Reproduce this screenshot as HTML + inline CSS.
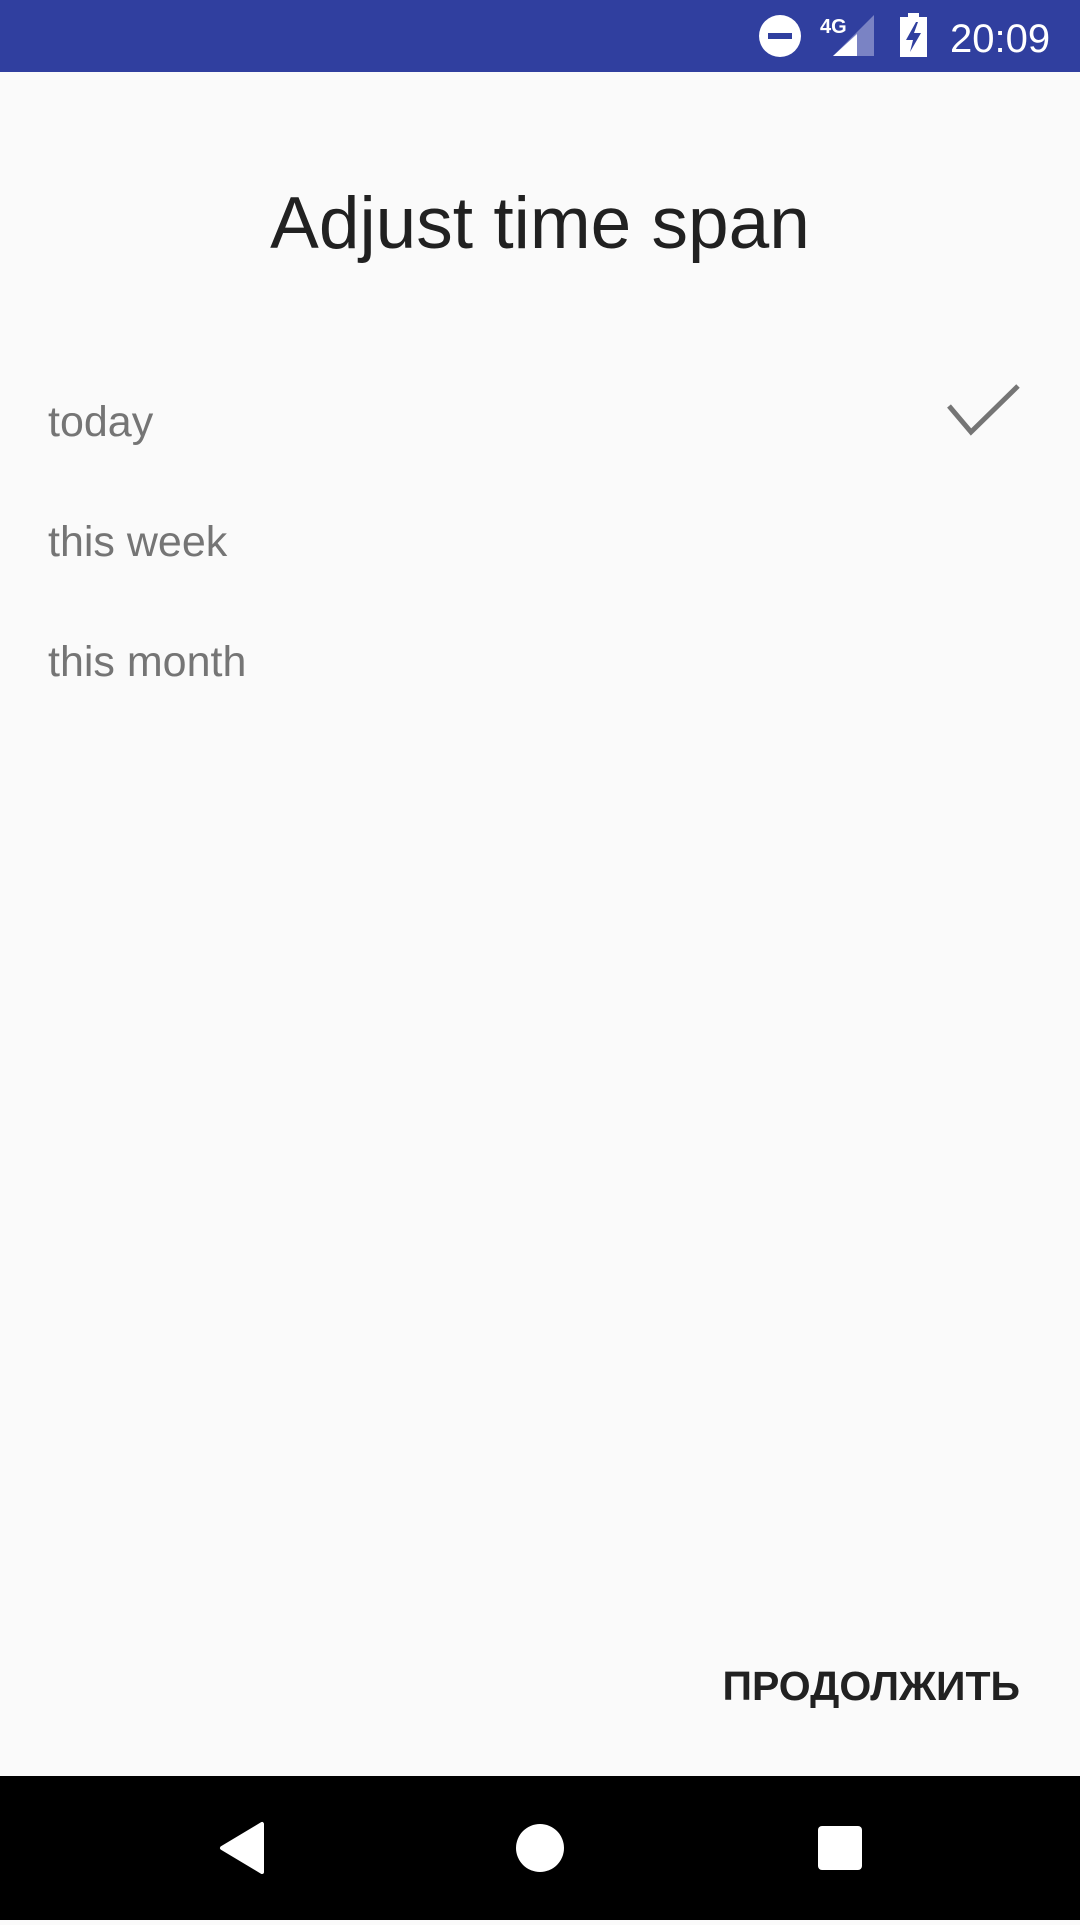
<!DOCTYPE html>
<html><head><meta charset="utf-8"><style>
*{margin:0;padding:0;box-sizing:border-box}
body{width:1080px;height:1920px;background:#fafafa;position:relative;overflow:hidden;font-family:"Liberation Sans",sans-serif}
.sb{position:absolute;left:0;top:0;width:1080px;height:72px;background:#303f9f}
.t{position:absolute;white-space:nowrap}
.nav{position:absolute;left:0;top:1776px;width:1080px;height:144px;background:#000}
</style></head><body>
<div class="sb">
<svg width="1080" height="72" style="position:absolute;left:0;top:0">
<circle cx="780" cy="36" r="21" fill="#fff"/>
<rect x="768" y="33" width="24" height="6" fill="#303f9f"/>
<text x="820" y="33" font-family="Liberation Sans" font-weight="bold" font-size="20" fill="#fff">4G</text>
<polygon points="874,15 874,56 833,56" fill="#7a83c4"/>
<polygon points="857,34 857,56 833,56" fill="#fff"/>
<rect x="908" y="13" width="11" height="5" fill="#fff"/>
<rect x="900" y="17" width="27" height="40" fill="#fff"/>
<polygon points="916,22 906,40 913,40 910,52 921,33 914,33 918,22" fill="#303f9f"/>
<text x="950" y="52" font-family="Liberation Sans" font-size="40" fill="#fff">20:09</text>
</svg>
</div>
<div class="t" style="left:0;width:1080px;text-align:center;top:174px;font-size:73px;color:#212121;line-height:100px">Adjust time span</div>
<div class="t" style="left:48px;top:397px;font-size:43px;color:#757575;line-height:50px">today</div>
<div class="t" style="left:48px;top:517px;font-size:43px;color:#757575;line-height:50px">this week</div>
<div class="t" style="left:48px;top:637px;font-size:43px;color:#757575;line-height:50px">this month</div>
<svg width="80" height="70" style="position:absolute;left:940px;top:376px"><polyline points="9,30 31,56 78,10" fill="none" stroke="#757575" stroke-width="5"/></svg>
<div class="t" style="right:60px;top:1661px;font-size:41px;font-weight:bold;color:#212121;line-height:50px">ПРОДОЛЖИТЬ</div>
<div class="nav">
<svg width="1080" height="144">
<polygon points="262,48 262,96 222,72" fill="#fff" stroke="#fff" stroke-width="4" stroke-linejoin="round"/>
<circle cx="540" cy="72" r="24" fill="#fff"/>
<rect x="818" y="50" width="44" height="44" rx="4" fill="#fff"/>
</svg>
</div>
</body></html>
